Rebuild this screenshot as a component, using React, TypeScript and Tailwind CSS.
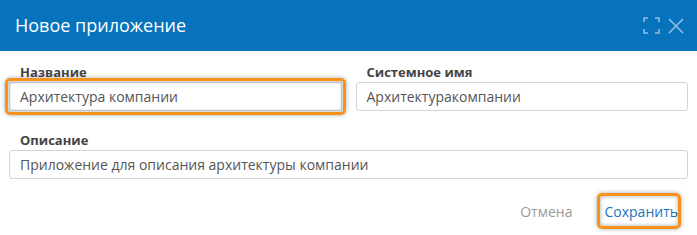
import React from "react"

function Field({ label, value, highlight }: { label: string; value: string; highlight?: boolean }) {
  return (
    <div className="flex flex-col">
      <label className="pl-[11px] text-[13px] leading-[18px] font-bold text-[#444]">{label}</label>
      <div className="relative mt-[1px]">
        <div className="h-[29px] rounded-[3px] border border-[#d4d4d4] bg-white px-[10px] flex items-center text-[14px] text-[#555]">
          {value}
        </div>
        {highlight && (
          <div className="pointer-events-none absolute -inset-[4px] rounded-[5px] border-[3px] border-[#f7921e] shadow-[0_0_4px_rgba(0,0,0,0.35),inset_0_0_4px_rgba(0,0,0,0.35)]" />
        )}
      </div>
    </div>
  )
}

export default function App() {
  return (
    <div className="w-[697px] h-[235px] bg-white font-['Open_Sans',sans-serif]">
      <div className="h-[51px] bg-[#0673bc] flex items-center justify-between pl-[15px] pr-[13px]">
        <h1 className="text-[18px] text-white">Новое приложение</h1>
        <div className="flex items-center gap-[8px] text-[#8fbfe3]">
          <svg width="17" height="17" viewBox="0 0 17 17" fill="none" stroke="currentColor" strokeWidth="1.6">
            <path d="M1 5V1h4M12 1h4v4M16 12v4h-4M5 16H1v-4" />
          </svg>
          <svg width="16" height="16" viewBox="0 0 16 16" fill="none" stroke="currentColor" strokeWidth="1.6">
            <path d="M1 1l14 14M15 1L1 15" />
          </svg>
        </div>
      </div>
      <div className="px-[9px] pt-[12px]">
        <div className="grid grid-cols-2 gap-[14px]">
          <Field label="Название" value="Архитектура компании" highlight />
          <Field label="Системное имя" value="Архитектуракомпании" />
        </div>
        <div className="mt-[20px]">
          <Field label="Описание" value="Приложение для описания архитектуры компании" />
        </div>
        <div className="mt-[22px] flex justify-end items-center gap-[32px] pr-[10px]">
          <button className="text-[14px] text-[#999]">Отмена</button>
          <button className="relative text-[14px] text-[#1a73c0]">
            Сохранить
            <span className="pointer-events-none absolute -left-[7px] -right-[3px] -top-[8px] -bottom-[7px] rounded-[5px] border-[3px] border-[#f7921e] shadow-[0_0_4px_rgba(0,0,0,0.35),inset_0_0_4px_rgba(0,0,0,0.35)]" />
          </button>
        </div>
      </div>
    </div>
  )
}
